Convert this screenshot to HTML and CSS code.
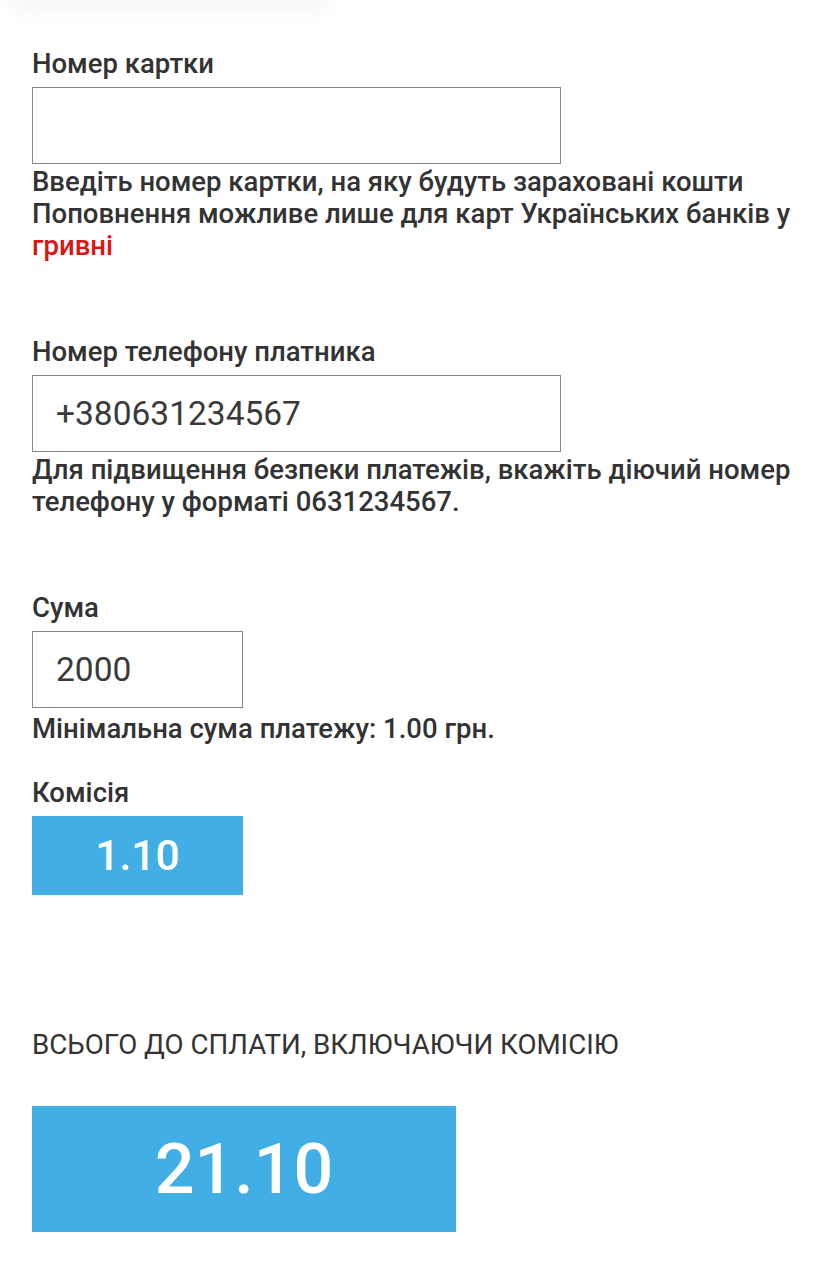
FILE: index.html
```html
<!DOCTYPE html>
<html lang="uk">
<head>
    <meta charset="UTF-8">
    <meta name="viewport" content="width=device-width, initial-scale=1.0">
    <title>Поповнення картки</title>
    <link rel="stylesheet" href="styles.css">
</head>
<body>
    <div class="card-edge"></div>
    <form class="pay-form">
        <div class="field field-card">
            <label class="field-label" for="card">Номер картки</label>
            <input class="field-input" id="card" type="text" value="">
            <p class="field-help">Введіть номер картки, на яку будуть зараховані кошти<br>Поповнення можливе лише для карт Українських банків у <span class="accent">гривні</span></p>
        </div>
        <div class="field field-phone">
            <label class="field-label" for="phone">Номер телефону платника</label>
            <input class="field-input" id="phone" type="text" value="+380631234567">
            <p class="field-help">Для підвищення безпеки платежів, вкажіть діючий номер телефону у форматі 0631234567.</p>
        </div>
        <div class="field field-sum">
            <label class="field-label" for="sum">Сума</label>
            <input class="field-input short" id="sum" type="text" value="2000">
            <p class="field-help min">Мінімальна сума платежу: 1.00 грн.</p>
        </div>
        <div class="field field-fee">
            <div class="field-label">Комісія</div>
            <div class="fee-box">1.10</div>
        </div>
        <div class="total">
            <div class="total-label">ВСЬОГО ДО СПЛАТИ, ВКЛЮЧАЮЧИ КОМІСІЮ</div>
            <div class="total-box">21.10</div>
        </div>
    </form>
</body>
</html>
```

FILE: styles.css
```css
body {
    font-family: Roboto, "Noto Sans", Arial, sans-serif;
    color: #333;
    margin: 0;
    padding: 0;
    background-color: #fff;
}

.card-edge {
    width: 320px;
    height: 12px;
    margin: -12px 0 0 10px;
    border-radius: 0 0 40px 40px;
    box-shadow: 0 6px 22px rgba(0, 0, 0, 0.07);
}

.pay-form {
    padding: 48px 24px 40px 32px;
}

.field-label {
    display: block;
    font-size: 27.5px;
    font-weight: 500;
    line-height: 32px;
    margin-bottom: 7px;
}

.field-input {
    display: block;
    box-sizing: border-box;
    width: 529px;
    height: 77px;
    margin: 0;
    padding: 0 23px;
    border: 1px solid #858585;
    border-radius: 0;
    font-family: Roboto, Arial, sans-serif;
    font-size: 33.5px;
    color: #3a3a3a;
    background: #fff;
    outline: none;
}

    .field-input.short {
        width: 211px;
    }

.field-help {
    margin: 2px 0 0;
    font-size: 27.5px;
    font-weight: 500;
    line-height: 32px;
}

    .field-help.min {
        margin-top: 5px;
    }

.accent {
    color: #dd1414;
}

.field-card {
    margin-bottom: 74px;
}

.field-phone {
    margin-bottom: 74px;
}

.field-sum {
    margin-bottom: 32px;
}

.fee-box,
.total-box {
    background-color: #41aee5;
    color: #fff;
    font-weight: 500;
    text-align: center;
}

.fee-box {
    width: 211px;
    height: 79px;
    line-height: 79px;
    font-size: 42.5px;
}

.total {
    margin-top: 134px;
}

.total-label {
    font-size: 27.7px;
    line-height: 32px;
    margin-bottom: 45px;
}

.total-box {
    width: 424px;
    height: 126px;
    line-height: 126px;
    font-size: 70px;
}
```
